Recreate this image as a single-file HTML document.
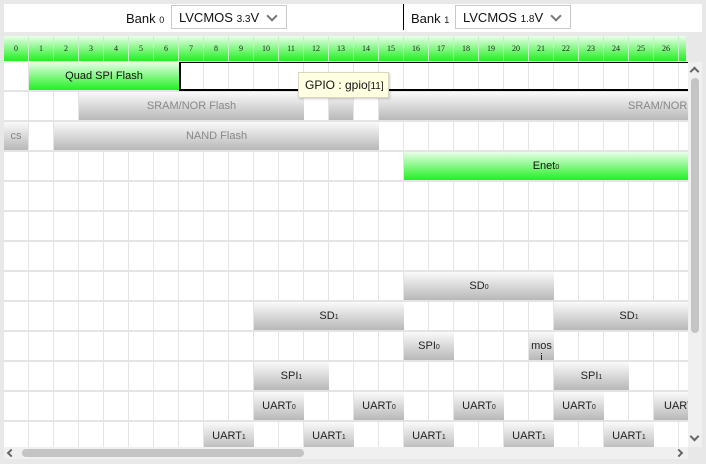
<!DOCTYPE html>
<html><head><meta charset="utf-8"><style>
*{margin:0;padding:0;box-sizing:border-box}
body{width:706px;height:464px;background:#e8e8e8;position:relative;overflow:hidden;font-family:"Liberation Sans",Arial,sans-serif;font-size:11px}
.top{position:absolute;left:4px;top:4px;width:698px;height:28px;background:#fff}
.lbl{position:absolute;top:7px;font-size:13px;color:#111}
.lbl small{font-size:9px}
.sel{position:absolute;top:1px;height:24px;border:1px solid #c8c8c8;background:#fff;font-size:13px;padding:4px 0 0 7px;color:#111}
.sel small{font-size:10px}
.chev{position:absolute;right:10px;top:6px;width:8px;height:8px;border-right:2px solid #777;border-bottom:2px solid #777;transform:rotate(45deg);transform-origin:center}
.hdr{position:absolute;left:4px;top:36px;width:682px;height:25px;background:linear-gradient(#eaffea,#20f020);overflow:hidden}
.hdr span{position:absolute;top:0;width:25px;height:25px;border-right:1px solid #c8f0c8;text-align:center;font-family:"Liberation Serif",serif;font-size:8px;line-height:25px;color:#222}
.grid{position:absolute;left:4px;top:62px;width:684px;height:385px;overflow:hidden;background-color:#fff;
background-image:linear-gradient(to bottom,transparent 28px,#e4e4e4 28px),linear-gradient(to right,transparent 24px,#e4e4e4 24px);
background-size:100% 30px,25px 100%}
.b{position:absolute;height:28px;background:linear-gradient(#fafafa,#b8b8b8);text-align:center;line-height:28px;color:#222;font-size:11px;white-space:nowrap;overflow:hidden}
.b.g{background:linear-gradient(#e8ffe8,#22f022);color:#111}
.b.f{color:#888}
.b small{font-size:7px}
.vs{position:absolute;left:688px;top:62px;width:14px;height:385px;background:#f0f0f0}
.hs{position:absolute;left:4px;top:447px;width:684px;height:12px;background:#f0f0f0}
.tip{position:absolute;left:298px;top:72px;width:91px;height:26px;background:#ffffe1;border:1px solid #d8d8c0;font-size:12px;line-height:24px;padding-left:6px;color:#111;box-shadow:1px 1px 2px rgba(0,0,0,.2)}
</style></head><body>
<div class="top">
 <div class="lbl" style="left:122px">Bank <small>0</small></div>
 <div class="sel" style="left:167px;width:116px">LVCMOS <small>3.3</small>V<div class="chev"></div></div>
 <div style="position:absolute;left:399px;top:0;width:1px;height:26px;background:#000"></div>
 <div class="lbl" style="left:407px">Bank <small>1</small></div>
 <div class="sel" style="left:451px;width:116px">LVCMOS <small>1.8</small>V<div class="chev"></div></div>
</div>
<div class="hdr">
<span style="left:0">0</span><span style="left:25px">1</span><span style="left:50px">2</span><span style="left:75px">3</span><span style="left:100px">4</span><span style="left:125px">5</span><span style="left:150px">6</span><span style="left:175px">7</span><span style="left:200px">8</span><span style="left:225px">9</span><span style="left:250px">10</span><span style="left:275px">11</span><span style="left:300px">12</span><span style="left:325px">13</span><span style="left:350px">14</span><span style="left:375px">15</span><span style="left:400px">16</span><span style="left:425px">17</span><span style="left:450px">18</span><span style="left:475px">19</span><span style="left:500px">20</span><span style="left:525px">21</span><span style="left:550px">22</span><span style="left:575px">23</span><span style="left:600px">24</span><span style="left:625px">25</span><span style="left:650px">26</span><span style="left:675px">27</span>
</div>
<div class="grid">
 <div class="b g" style="left:25px;top:0;width:150px">Quad SPI Flash</div>
 <div style="position:absolute;left:175px;top:-1px;width:520px;height:30px;border:2px solid #000;border-right:none"></div>
 <div class="b f" style="left:75px;top:30px;width:225px">SRAM/NOR Flash</div>
 <div class="b" style="left:325px;top:30px;width:24px"></div>
 <div class="b f" style="left:375px;top:30px;width:309px;text-align:left;padding-left:249px">SRAM/NOR Flash</div>
 <div class="b f" style="left:0;top:60px;width:24px">cs</div>
 <div class="b f" style="left:50px;top:60px;width:325px">NAND Flash</div>
 <div class="b g" style="left:400px;top:90px;width:284px">Enet<small>0</small></div>
 <div class="b" style="left:400px;top:210px;width:150px">SD<small>0</small></div>
 <div class="b" style="left:250px;top:240px;width:150px">SD<small>1</small></div>
 <div class="b" style="left:550px;top:240px;width:134px;padding-left:16px">SD<small>1</small></div>
 <div class="b" style="left:400px;top:270px;width:50px">SPI<small>0</small></div>
 <div class="b" style="left:525px;top:270px;width:25px;line-height:12px;padding-top:8px">mos<br>i</div>
 <div class="b" style="left:250px;top:300px;width:75px">SPI<small>1</small></div>
 <div class="b" style="left:550px;top:300px;width:75px">SPI<small>1</small></div>
 <div class="b" style="left:250px;top:330px;width:50px">UART<small>0</small></div>
 <div class="b" style="left:350px;top:330px;width:50px">UART<small>0</small></div>
 <div class="b" style="left:450px;top:330px;width:50px">UART<small>0</small></div>
 <div class="b" style="left:550px;top:330px;width:50px">UART<small>0</small></div>
 <div class="b" style="left:650px;top:330px;width:50px;text-align:left;padding-left:10px">UART<small>0</small></div>
 <div class="b" style="left:200px;top:360px;width:50px">UART<small>1</small></div>
 <div class="b" style="left:300px;top:360px;width:50px">UART<small>1</small></div>
 <div class="b" style="left:400px;top:360px;width:50px">UART<small>1</small></div>
 <div class="b" style="left:500px;top:360px;width:50px">UART<small>1</small></div>
 <div class="b" style="left:600px;top:360px;width:50px">UART<small>1</small></div>
</div>
<div class="tip">GPIO : gpio<span style="font-size:10px">[11]</span></div>
<div class="vs">
 <div style="position:absolute;left:3px;top:6px;width:7px;height:7px;border-left:2px solid #666;border-top:2px solid #666;transform:rotate(45deg)"></div>
 <div style="position:absolute;left:3px;top:16px;width:8px;height:255px;background:#c4c4c4;border-radius:4px"></div>
 <div style="position:absolute;left:3px;top:371px;width:7px;height:7px;border-right:2px solid #666;border-bottom:2px solid #666;transform:rotate(45deg)"></div>
</div>
<div class="hs">
 <div style="position:absolute;left:4px;top:3px;width:6px;height:6px;border-left:2px solid #666;border-bottom:2px solid #666;transform:rotate(45deg)"></div>
 <div style="position:absolute;left:18px;top:2px;width:282px;height:8px;background:#c4c4c4;border-radius:4px"></div>
 <div style="position:absolute;left:672px;top:3px;width:6px;height:6px;border-right:2px solid #666;border-top:2px solid #666;transform:rotate(45deg)"></div>
</div>
</body></html>
